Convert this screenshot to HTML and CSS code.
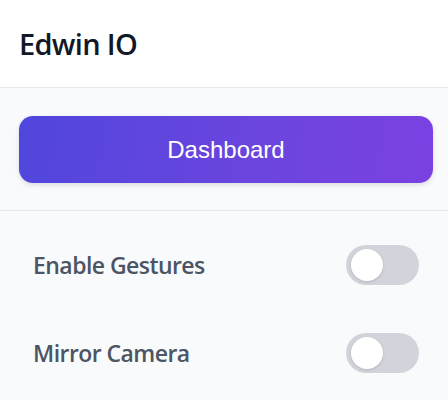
FILE: index.html
```html
<!DOCTYPE html>
<html>
<head>
<meta charset="utf-8">
<link rel="stylesheet" href="styles.css">
</head>
<body>
<div class="sidebar">
  <header class="header"><h1 class="title">Edwin IO</h1></header>
  <section class="nav">
    <button class="nav-btn">Dashboard</button>
  </section>
  <section class="settings">
    <div class="row">
      <span class="label">Enable Gestures</span>
      <span class="toggle"><span class="knob"></span></span>
    </div>
    <div class="row">
      <span class="label">Mirror Camera</span>
      <span class="toggle"><span class="knob"></span></span>
    </div>
  </section>
</div>
</body>
</html>
```
FILE: styles.css
```css
html, body { margin: 0; padding: 0; }
body {
  width: 448px;
  height: 400px;
  overflow: hidden;
  background: #f9fafb;
  font-family: "Open Sans", "Noto Sans", sans-serif;
}
.sidebar { display: flex; flex-direction: column; }
.header {
  height: 87px;
  background: #ffffff;
  border-bottom: 1px solid #e5e7eb;
  display: flex;
  align-items: center;
  padding: 0 19px;
}
.title {
  margin: 0;
  font-size: 29px;
  font-weight: 600;
  color: #111827;
  letter-spacing: -0.7px;
}
.nav {
  padding: 28px 15px 27px 19px;
  border-bottom: 1px solid #e5e7eb;
}
.nav-btn {
  display: block;
  width: 100%;
  height: 67px;
  border: none;
  border-radius: 14px;
  background: linear-gradient(100deg, #5046dd 0%, #6a45de 55%, #7b41e2 100%);
  color: #ffffff;
  font-family: "Liberation Sans", Arial, sans-serif;
  font-size: 24px;
  box-shadow: 0 2px 5px rgba(0,0,0,0.12);
}
.settings {
  padding: 10px 29px 0 33px;
  display: flex;
  flex-direction: column;
}
.row {
  height: 88px;
  display: flex;
  align-items: center;
  justify-content: space-between;
}
.label {
  font-size: 23px;
  font-weight: 600;
  color: #4b5563;
  letter-spacing: -0.55px;
}
.toggle {
  width: 73px;
  height: 40px;
  border-radius: 20px;
  background: #d1d5db;
  position: relative;
}
.knob {
  position: absolute;
  left: 5px;
  top: 4px;
  width: 32px;
  height: 32px;
  border-radius: 50%;
  background: #ffffff;
  box-shadow: 0 1px 3px rgba(0,0,0,0.15);
}
```
